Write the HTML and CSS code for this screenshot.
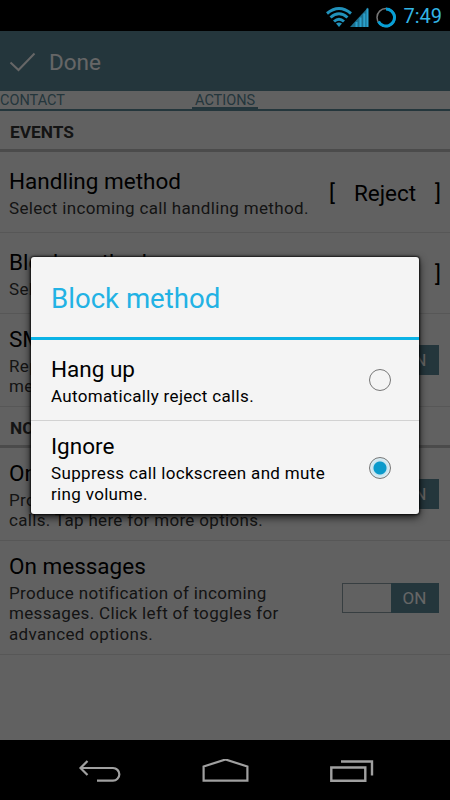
FILE: index.html
```
<!DOCTYPE html>
<html lang="en">
<head>
  <meta charset="UTF-8">
  <meta name="viewport" content="width=device-width, initial-scale=1.0">
  <title>Block method</title>
  <link rel="stylesheet" href="styles.css">
</head>
<body>
  <div class="status-bar">
    <svg class="status-icons" width="74" height="24" viewBox="0 0 74 24">
      <g fill="none" stroke="#2191ba" stroke-width="3">
        <path d="M1 9.500Q13 -0.500 25 9.500"/>
        <path d="M4.500 13.500Q13 6 21.500 13.500"/>
        <path d="M8 17.500Q13 13 18 17.500"/>
      </g>
      <path d="M10 19.500Q13 17.500 16 19.500L13 23z" fill="#2191ba"/>
      <path d="M24 23L42 3.500V23z" fill="#1c6f8e"/>
      <path d="M30.500 23v-5M34.500 23v-9.500M38.300 23v-13.500M41.500 23v-18.500" stroke="#2ba0cb" stroke-width="2"/>
      <circle cx="60" cy="13.500" r="9" fill="none" stroke="#777" stroke-width="1.500"/>
      <path d="M60 5a8.500 8.500 0 1 1-7.500 12.500" fill="none" stroke="#079fd6" stroke-width="3"/>
    </svg>
    <span class="clock">7:49</span>
  </div>

  <div class="screen">
    <div class="action-bar">
      <svg width="28" height="22" viewBox="0 0 28 22">
        <path d="M1.500 11.500L9.500 19L25.500 2.500" fill="none" stroke="#fff" stroke-width="2"/>
      </svg>
      <span class="done">Done</span>
    </div>
    <div class="tabs">
      <span class="tab">CONTACT</span>
      <span class="tab active">ACTIONS</span>
    </div>

    <h2 class="section">EVENTS</h2>
    <div class="row row-short">
      <div class="row-text">
        <div class="name">Handling method</div>
        <div class="desc">Select incoming call handling method.</div>
      </div>
      <div class="value"><span>[</span><span>Reject</span><span>]</span></div>
    </div>
    <div class="row row-short">
      <div class="row-text">
        <div class="name">Block method</div>
        <div class="desc">Select call block method.</div>
      </div>
      <div class="value"><span>[</span><span>Ignore</span><span>]</span></div>
    </div>
    <div class="row row-medium">
      <div class="row-text">
        <div class="name">SMS reply</div>
        <div class="desc">Reply to calls with<br>messages.</div>
      </div>
      <div class="toggle"><span class="toggle-on">ON</span></div>
    </div>

    <h2 class="section">NOTIFICATIONS</h2>
    <div class="row row-medium">
      <div class="row-text">
        <div class="name">On calls</div>
        <div class="desc">Produce notification of incoming<br>calls. Tap here for more options.</div>
      </div>
      <div class="toggle"><span class="toggle-on">ON</span></div>
    </div>
    <div class="row row-tall">
      <div class="row-text">
        <div class="name">On messages</div>
        <div class="desc">Produce notification of incoming<br>messages. Click left of toggles for<br>advanced options.</div>
      </div>
      <div class="toggle"><span class="toggle-on">ON</span></div>
    </div>
  </div>

  <div class="overlay">
    <div class="dialog">
      <h1 class="dialog-title">Block method</h1>
      <div class="option">
        <div class="row-text">
          <div class="name">Hang up</div>
          <div class="desc">Automatically reject calls.</div>
        </div>
        <span class="radio"></span>
      </div>
      <div class="option option-tall">
        <div class="row-text">
          <div class="name">Ignore</div>
          <div class="desc">Suppress call lockscreen and mute<br>ring volume.</div>
        </div>
        <span class="radio checked"></span>
      </div>
    </div>
  </div>

  <div class="nav-bar">
    <svg width="44" height="26" viewBox="0 0 44 26">
      <path d="M9.500 2L2.500 9L9.500 16M2.500 9H35A6.300 6.300 0 0 1 35 21.700H19" fill="none" stroke="#a0a0a0" stroke-width="2.200"/>
    </svg>
    <svg width="48" height="26" viewBox="0 0 48 26">
      <path d="M1.600 21.700V7.500L23.500 0.500L45.400 7.500V21.700z" fill="none" stroke="#a0a0a0" stroke-width="2.200"/>
    </svg>
    <svg width="44" height="26" viewBox="0 0 44 26">
      <path d="M1.300 8.500H35.300V21.700H1.300zM11 2.500H42V16.500" fill="none" stroke="#a0a0a0" stroke-width="2.400"/>
    </svg>
  </div>
</body>
</html>
```
FILE: styles.css
```
* {
  box-sizing: border-box;
}
body {
  position: relative;
  width: 450px;
  height: 800px;
  margin: 0;
  display: flex;
  flex-direction: column;
  overflow: hidden;
  background: #000;
  color: #000;
  font-family: Roboto, "Liberation Sans", sans-serif;
}
.status-bar {
  height: 31px;
  flex: none;
  display: flex;
  justify-content: flex-end;
  align-items: center;
  padding-right: 8px;
}
.status-icons {
  margin: 0 3px 0 0;
}
.clock {
  color: #33b5e5;
  font-size: 20px;
}
.screen {
  height: 709px;
  flex: none;
  background: #f3f3f3;
}
.action-bar {
  height: 60px;
  display: flex;
  align-items: center;
  padding: 2px 0 0 9px;
  background: #5a8797;
  color: #fff;
}
.done {
  margin-left: 12px;
  font-size: 22.500px;
}
.tabs {
  height: 20px;
  display: flex;
  border-bottom: 2px solid #5a8797;
  color: #5a8797;
  font-size: 14.5px;
  line-height: 20px;
}
.tab {
  width: 192px;
}
.tab.active {
  width: 66px;
  height: 18px;
  padding-left: 3px;
  border-bottom: 2px solid #5a8797;
}
.section {
  height: 41px;
  margin: 0;
  padding: 1px 10px 0;
  border-bottom: 3px solid #bcbcbc;
  color: #333;
  font-size: 17.300px;
  font-weight: bold;
  line-height: 41px;
}
.row {
  display: flex;
  justify-content: space-between;
  align-items: center;
  padding: 0 11px 0 9px;
  border-bottom: 1px solid #dadada;
}
.row-short {
  height: 81px;
}
.row-medium {
  height: 93px;
}
.row-tall {
  height: 114px;
}
.row-text {
  padding-top: 2px;
}
.name {
  font-size: 22.500px;
  line-height: 27px;
  white-space: nowrap;
}
.desc {
  margin-top: 3px;
  font-size: 17px;
  letter-spacing: 0.33px;
  line-height: 20.500px;
  white-space: nowrap;
}
.row .desc {
  color: #333;
}
.value {
  width: 112px;
  display: flex;
  justify-content: space-between;
  margin-right: -2px;
  padding-top: 2px;
  font-size: 22.500px;
}
.toggle {
  width: 97px;
  height: 30px;
  display: flex;
  justify-content: flex-end;
  border: 1px solid #8a9ca2;
}
.toggle-on {
  width: 48px;
  margin: -1px;
  padding-right: 1px;
  background: #5a8797;
  color: #fff;
  font-size: 17px;
  line-height: 31px;
  text-align: center;
}
.overlay {
  position: absolute;
  top: 31px;
  left: 0;
  width: 450px;
  height: 709px;
  padding: 226px 31px 0;
  background: rgba(0, 0, 0, 0.6);
}
.dialog {
  height: 257px;
  border-radius: 3px;
  background: #f4f4f4;
  box-shadow: 0 0 2px 1px rgba(0, 0, 0, 0.7), 0 3px 9px rgba(0, 0, 0, 0.8);
}
.dialog-title {
  height: 83px;
  margin: 0;
  padding-left: 20px;
  border-bottom: 3px solid #0bb3e6;
  color: #22b2e4;
  font-size: 27.600px;
  font-weight: normal;
  line-height: 84px;
}
.option {
  height: 81px;
  display: flex;
  justify-content: space-between;
  align-items: center;
  padding: 0 28px 0 20px;
  border-bottom: 1px solid #d2d2d2;
}
.option-tall {
  height: 93px;
  border-bottom: none;
}
.radio {
  width: 22px;
  height: 22px;
  flex: none;
  border: 1px solid #777;
  border-radius: 50%;
}
.radio.checked {
  background: radial-gradient(circle, #0a9acb 0, #0a9acb 6px, #c5e3ee 7px, #d8ebf2 9px);
}
.nav-bar {
  height: 60px;
  flex: none;
  display: flex;
  justify-content: space-between;
  align-items: center;
  padding: 4px 76px 0 78px;
}
```
